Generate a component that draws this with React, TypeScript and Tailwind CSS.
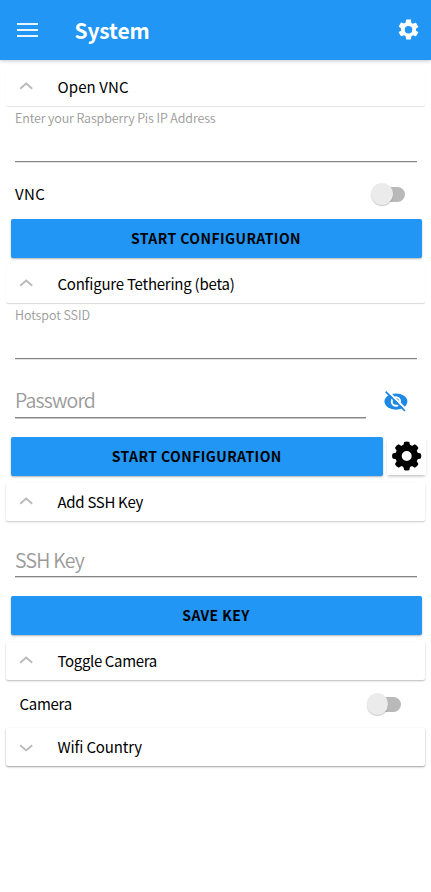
import React from "react";

const FONT = "font-['Noto_Sans_CJK_SC','Noto_Sans',sans-serif]";

function Chevron({ down = false }: { down?: boolean }) {
  return (
    <svg width="14" height="8" viewBox="0 0 14 8" fill="none" stroke="#b9b9b9" strokeWidth="1.8" className="shrink-0">
      <path d={down ? "M1.2 1.2L7.2 6.4L13.2 1.2" : "M1.2 6.7L7.2 1.5L13.2 6.7"} />
    </svg>
  );
}

function Section({ title, spacing, shadow, down }: { title: string; spacing: string; shadow: string; down?: boolean }) {
  return (
    <div className="h-[38px] px-1.5">
      <div className={`flex h-[38px] items-center rounded-[2px] bg-white pl-[13px] ${shadow}`}>
        <div className={down ? "pt-[2px]" : "pb-[2px]"}>
          <Chevron down={down} />
        </div>
        <span className={`ml-[24.5px] text-[15px] leading-[38px] whitespace-nowrap text-black ${spacing}`}>{title}</span>
      </div>
    </div>
  );
}

function Button({ label, className = "" }: { label: string; className?: string }) {
  return (
    <button
      className={`flex h-[39px] items-center justify-center rounded-[2px] bg-[#2196f5] text-[14px] font-bold whitespace-nowrap text-black shadow-[0_1px_2px_rgba(0,0,0,0.3)] ${className}`}
    >
      {label}
    </button>
  );
}

function Toggle() {
  return (
    <div className="relative h-[15px] w-[31px]">
      <div className="ml-[3px] h-[15px] w-[28px] rounded-full bg-[#b9b9b9]" />
      <div className="absolute -top-[3.5px] -left-[3px] size-[21.5px] rounded-full bg-[#ebebeb] shadow-[0_1px_1px_rgba(0,0,0,0.22)]" />
    </div>
  );
}

const GEAR =
  "M19.14 12.94c.04-.3.06-.61.06-.94s-.02-.64-.07-.94l2.03-1.58a.49.49 0 0 0 .12-.61l-1.92-3.32a.49.49 0 0 0-.59-.22l-2.39.96a7 7 0 0 0-1.62-.94l-.36-2.54A.48.48 0 0 0 13.92 2h-3.84a.48.48 0 0 0-.48.41l-.36 2.54a7.4 7.4 0 0 0-1.62.94l-2.39-.96a.48.48 0 0 0-.59.22L2.72 8.47a.48.48 0 0 0 .12.61l2.03 1.58c-.05.3-.07.62-.07.94s.02.64.07.94l-2.03 1.58a.49.49 0 0 0-.12.61l1.92 3.32c.12.22.37.29.59.22l2.39-.96c.5.38 1.03.7 1.62.94l.36 2.54c.05.24.24.41.48.41h3.84c.24 0 .44-.17.47-.41l.36-2.54a7 7 0 0 0 1.62-.94l2.39.96c.22.08.47 0 .59-.22l1.92-3.32a.48.48 0 0 0-.12-.61zM12 15.6A3.6 3.6 0 1 1 12 8.4a3.6 3.6 0 0 1 0 7.2z";

const TEETH = [0, 45, 90, 135, 180, 225, 270, 315];

export default function App() {
  return (
    <div className={`min-h-[892px] w-full overflow-hidden bg-white ${FONT}`}>
      <header className="flex h-[59.5px] items-center bg-[#2196f5] pr-[10px] pl-[17px] shadow-[0_1px_4px_rgba(0,0,0,0.22)]">
        <div className="flex w-[21px] flex-col gap-[4px]">
          <span className="h-[2px] bg-white/90" />
          <span className="h-[2px] bg-white/90" />
          <span className="h-[2px] bg-white/90" />
        </div>
        <h1 className="ml-[36.5px] pt-[1px] text-[21px] font-bold tracking-[-0.15px] text-white">System</h1>
        <svg width="25" height="25" viewBox="0 -0.3 24 24" fill="#fff" className="ml-auto">
          <path d={GEAR} />
        </svg>
      </header>

      <main className="pt-2">
        <Section title="Open VNC" spacing="tracking-[0.1px]" shadow="shadow-[0_1px_1px_rgba(0,0,0,0.11)]" />
        <div className="mr-[14px] ml-[15px] h-[56px] border-b border-[#858585] shadow-[0_1px_0_#e4e4e4]">
          <label className="block pt-[3px] text-[12.5px] leading-[18px] font-[350] tracking-[-0.11px] text-[#9a9a9a]">
            Enter your Raspberry Pis IP Address
          </label>
        </div>
        <div className="flex h-[57px] items-center justify-between pt-[8px] pr-[26px] pl-[15px] text-[15px] text-black">
          <span className="tracking-[0.4px]">VNC</span>
          <Toggle />
        </div>
        <Button label="START CONFIGURATION" className="ml-[10.5px] w-[411px] tracking-[0.43px]" />

        <div className="pt-[7px]">
          <Section title="Configure Tethering (beta)" spacing="tracking-[-0.23px]" shadow="shadow-[0_1px_1px_rgba(0,0,0,0.15)]" />
        </div>
        <div className="mr-[14px] ml-[15px] h-[56px] border-b border-[#858585] shadow-[0_1px_0_#e4e4e4]">
          <label className="block pt-[3px] text-[12.5px] leading-[18px] font-[350] tracking-[-0.07px] text-[#9a9a9a]">Hotspot SSID</label>
        </div>
        <div className="flex pl-[15px]">
          <div className="flex h-[59px] w-[351px] items-end border-b border-[#858585] shadow-[0_1px_0_#c8c8c8]">
            <span className="pb-[2px] text-[19.5px] font-[350] tracking-[-0.8px] text-[#9a9a9a]">Password</span>
          </div>
          <svg width="25" height="25" viewBox="0 0 24 24" className="mt-[30px] ml-[17px]">
            <ellipse cx="12.4" cy="12" rx="11" ry="7.8" fill="#1e88e5" />
            <circle cx="12.4" cy="12" r="4" fill="none" stroke="#fff" strokeWidth="1.9" />
            <path d="M4 1.5L22.4 20" stroke="#fff" strokeWidth="2" />
            <path d="M2.6 2.6L21 21" stroke="#1e88e5" strokeWidth="1.7" />
          </svg>
        </div>
        <div className="flex pt-[19px]">
          <Button label="START CONFIGURATION" className="ml-[10.5px] w-[372.5px] tracking-[0.43px]" />
          <div className="ml-[4px] flex h-[38px] w-[39px] items-center justify-center bg-white pt-[1px] shadow-[0_2px_3px_-1px_rgba(0,0,0,0.3)]">
            <svg width="30" height="30" viewBox="-14.7 -15 30 30">
              {TEETH.map((a) => (
                <path key={a} d="M-3.8 -9L-2.6 -14Q0 -15.2 2.6 -14L3.8 -9Z" transform={`rotate(${a})`} />
              ))}
              <circle r="8.2" fill="none" stroke="#000" strokeWidth="6.4" />
            </svg>
          </div>
        </div>

        <div className="pt-[7px]">
          <Section title="Add SSH Key" spacing="tracking-[-0.3px]" shadow="shadow-[0_1px_2px_rgba(0,0,0,0.22)]" />
        </div>
        <div className="mr-[14px] ml-[15px] flex h-[56px] items-end border-b border-[#858585] shadow-[0_1px_0_#d8d8d8]">
          <span className="pb-[1px] text-[19.5px] font-[350] tracking-[-0.75px] text-[#9a9a9a]">SSH Key</span>
        </div>
        <Button label="SAVE KEY" className="mt-[19px] ml-[10.5px] w-[411px] tracking-[0.4px]" />
        <div className="pt-[7px]">
          <Section title="Toggle Camera" spacing="tracking-[-0.35px]" shadow="shadow-[0_1px_2px_rgba(0,0,0,0.28)]" />
        </div>
        <div className="flex h-[48px] items-center justify-between pt-px pr-[30.5px] pl-[19.5px] text-[15px] text-black">
          <span className="tracking-[-0.3px]">Camera</span>
          <Toggle />
        </div>
        <Section title="Wifi Country" spacing="tracking-[-0.15px]" shadow="shadow-[0_1px_2px_rgba(0,0,0,0.38)]" down />
      </main>
    </div>
  );
}
